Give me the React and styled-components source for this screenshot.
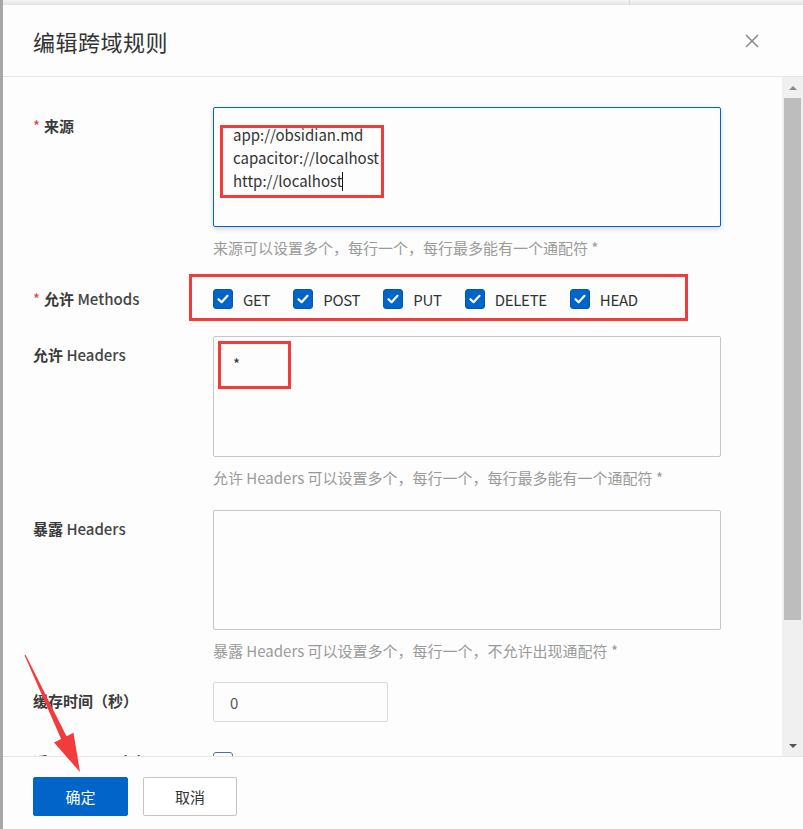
import React from "react";
import styled, { createGlobalStyle } from "styled-components";

const GlobalStyle = createGlobalStyle`
  html, body {
    margin: 0;
    padding: 0;
    background: #fdfdfd;
  }
  body {
    font-family: "Noto Sans CJK SC", "Noto Sans", sans-serif;
    color: #333;
  }
  * {
    box-sizing: border-box;
  }
`;

const Page = styled.div`
  position: relative;
  width: 803px;
  height: 829px;
  display: flex;
  flex-direction: column;
  border-left: 3px solid #a6a6a6;
  background: #fdfdfd;
  overflow: hidden;
`;

const TopStrip = styled.div`
  flex: 0 0 5px;
  display: flex;
  background: linear-gradient(#f4f4f4, #e3e3e3);
  .seam {
    width: 627px;
    border-right: 1px solid #d8d8d8;
  }
`;

const Header = styled.header`
  flex: 0 0 72px;
  display: flex;
  align-items: center;
  justify-content: space-between;
  padding: 0 44px 0 30px;
  border-bottom: 1px solid #e6e6e6;
`;

const Title = styled.h2`
  margin: 0;
  font-size: 22px;
  font-weight: 400;
  color: #333;
  letter-spacing: 0.5px;
`;

const CloseBtn = styled.div`
  width: 14px;
  height: 14px;
  display: flex;
  cursor: pointer;
`;

const Main = styled.div`
  flex: 0 0 679px;
  height: 679px;
  min-height: 0;
  overflow: hidden;
  display: flex;
`;

const Body = styled.div`
  flex: 1;
  min-height: 0;
  overflow: hidden;
  padding: 30px 0 0 30px;
`;

const ScrollBar = styled.div`
  width: 21px;
  background: #f0f0f0;
  display: flex;
  flex-direction: column;
  align-items: center;
`;

const ScrollArrow = styled.div`
  height: 21px;
  width: 100%;
  flex-shrink: 0;
  display: flex;
  align-items: center;
  justify-content: center;
  &::after {
    content: "";
    border-left: 4px solid transparent;
    border-right: 4px solid transparent;
    ${(p) =>
      p.$down
        ? "border-top: 4px solid #555;"
        : "border-bottom: 4px solid #8a8a8a;"}
  }
`;

const Thumb = styled.div`
  width: 17px;
  height: 522px;
  flex-shrink: 0;
  background: #bdbdbd;
`;

const Spacer = styled.div`
  flex: 1;
`;

const FormItem = styled.div`
  display: flex;
  margin-bottom: ${(p) => p.$mb || 0}px;
`;

const Label = styled.div`
  width: 180px;
  flex-shrink: 0;
  padding-top: ${(p) => (p.$pt === undefined ? 9 : p.$pt)}px;
  font-size: 15px;
  line-height: 20px;
  font-weight: 700;
  color: #3a3a3a;
  white-space: nowrap;
`;

const Latin = styled.span`
  font-weight: 500;
  color: #444;
`;

const Required = styled.span`
  color: #e83b3b;
  font-weight: 400;
  margin-right: 4px;
`;

const Control = styled.div`
  width: 508px;
  display: flex;
  flex-direction: column;
`;

const TextBox = styled.div`
  position: relative;
  height: ${(p) => p.$h || 120}px;
  border: 1px solid ${(p) => (p.$focused ? "#0064c8" : "#c3c6cd")};
  border-radius: 2px;
  padding: 15px 19px;
  font-size: 15px;
  line-height: 23px;
  color: #333;
  white-space: pre;
  background: #fdfdfd;
  box-shadow: ${(p) => (p.$focused ? "0 2px 5px rgba(0, 0, 0, 0.16)" : "none")};
`;

const Caret = styled.span`
  display: inline-block;
  width: 1px;
  height: 19px;
  background: #111;
  vertical-align: -4px;
`;

const Help = styled.div`
  margin-top: 11px;
  font-size: 15px;
  line-height: 20px;
  color: #9a9a9a;
`;

const RedBox = styled.div`
  position: absolute;
  top: ${(p) => p.$top}px;
  left: ${(p) => p.$left}px;
  width: ${(p) => p.$w}px;
  height: ${(p) => p.$h}px;
  border: 3px solid #f23c3c;
  pointer-events: none;
`;

const MethodGroup = styled.div`
  position: relative;
  height: 38px;
  display: flex;
  align-items: center;
`;

const CheckItem = styled.label`
  display: flex;
  align-items: center;
  gap: 10px;
  margin-right: 23px;
  font-size: 15px;
  letter-spacing: -0.3px;
  color: #333;
`;

const CheckBox = styled.span`
  width: 20px;
  height: 20px;
  border-radius: 3px;
  display: flex;
  align-items: center;
  justify-content: center;
  background: ${(p) => (p.$checked ? "#0064c8" : "#fff")};
  border: 1px solid ${(p) => (p.$checked ? "#0058b0" : "#4d6f9c")};
`;

const NumberInput = styled.div`
  width: 175px;
  height: 40px;
  border: 1px solid #d9d9d9;
  border-radius: 2px;
  padding-left: 16px;
  display: flex;
  align-items: center;
  font-size: 15px;
  color: #555;
`;

const Footer = styled.footer`
  flex: 1;
  border-top: 1px solid #e6e6e6;
  padding: 20px 30px;
  display: flex;
  gap: 15px;
  align-items: flex-start;
`;

const Button = styled.button`
  width: ${(p) => p.$w}px;
  height: 39px;
  border-radius: 2px;
  font-family: inherit;
  font-size: 15px;
  cursor: pointer;
  border: 1px solid ${(p) => (p.$primary ? "#0064c8" : "#c4c4c4")};
  background: ${(p) => (p.$primary ? "#0064c8" : "#fff")};
  color: ${(p) => (p.$primary ? "#fff" : "#333")};
`;

const ArrowLayer = styled.svg`
  position: absolute;
  left: 0;
  top: 0;
  pointer-events: none;
`;

const Check = () => (
  <svg width="14" height="14" viewBox="0 0 14 14">
    <path
      d="M2.5 7.2 L5.6 10.2 L11.5 3.8"
      fill="none"
      stroke="#fff"
      strokeWidth="2.2"
      strokeLinecap="round"
      strokeLinejoin="round"
    />
  </svg>
);

const methods = ["GET", "POST", "PUT", "DELETE", "HEAD"];

export default function App() {
  return (
    <>
      <GlobalStyle />
      <Page>
        <TopStrip>
          <div className="seam" />
        </TopStrip>
        <Header>
          <Title>编辑跨域规则</Title>
          <CloseBtn>
            <svg width="14" height="14" viewBox="0 0 14 14">
              <path d="M1 1 L13 13 M13 1 L1 13" stroke="#888" strokeWidth="1.5" />
            </svg>
          </CloseBtn>
        </Header>

        <Main>
          <Body>
            <FormItem $mb={22}>
              <Label>
                <Required>*</Required>来源
              </Label>
              <Control>
                <TextBox $focused>
                  {"app://obsidian.md\ncapacitor://localhost\nhttp://localhost"}
                  <Caret />
                  <RedBox $top={17} $left={6} $w={164} $h={73} />
                </TextBox>
                <Help>来源可以设置多个，每行一个，每行最多能有一个通配符 *</Help>
              </Control>
            </FormItem>

            <FormItem $mb={18}>
              <Label>
                <Required>*</Required>允许 <Latin>Methods</Latin>
              </Label>
              <Control>
                <MethodGroup>
                  {methods.map((m) => (
                    <CheckItem key={m}>
                      <CheckBox $checked>
                        <Check />
                      </CheckBox>
                      {m}
                    </CheckItem>
                  ))}
                  <RedBox $top={-6} $left={-24} $w={499} $h={47} />
                </MethodGroup>
              </Control>
            </FormItem>

            <FormItem $mb={22}>
              <Label>
                允许 <Latin>Headers</Latin>
              </Label>
              <Control>
                <TextBox $h={121}>
                  {"*"}
                  <RedBox $top={4} $left={4} $w={73} $h={48} />
                </TextBox>
                <Help>允许 Headers 可以设置多个，每行一个，每行最多能有一个通配符 *</Help>
              </Control>
            </FormItem>

            <FormItem $mb={21}>
              <Label>
                暴露 <Latin>Headers</Latin>
              </Label>
              <Control>
                <TextBox />
                <Help>暴露 Headers 可以设置多个，每行一个，不允许出现通配符 *</Help>
              </Control>
            </FormItem>

            <FormItem $mb={30}>
              <Label>缓存时间（秒）</Label>
              <Control>
                <NumberInput>0</NumberInput>
              </Control>
            </FormItem>

            <FormItem>
              <Label $pt={0}>
                返回 <Latin>Vary: Origin</Latin>
              </Label>
              <Control>
                <CheckBox />
              </Control>
            </FormItem>
          </Body>

          <ScrollBar>
            <ScrollArrow />
            <Thumb />
            <Spacer />
            <ScrollArrow $down />
          </ScrollBar>
        </Main>

        <Footer>
          <Button $primary $w={95}>确定</Button>
          <Button $w={94}>取消</Button>
        </Footer>

        <ArrowLayer width="803" height="829" viewBox="0 0 803 829">
          <polygon
            points="21.5,655.3 58.1,738.9 51,742.5 77,772 70.5,732.8 63.5,736.3 22.6,654.7"
            fill="#f23c3c"
          />
        </ArrowLayer>
      </Page>
    </>
  );
}
